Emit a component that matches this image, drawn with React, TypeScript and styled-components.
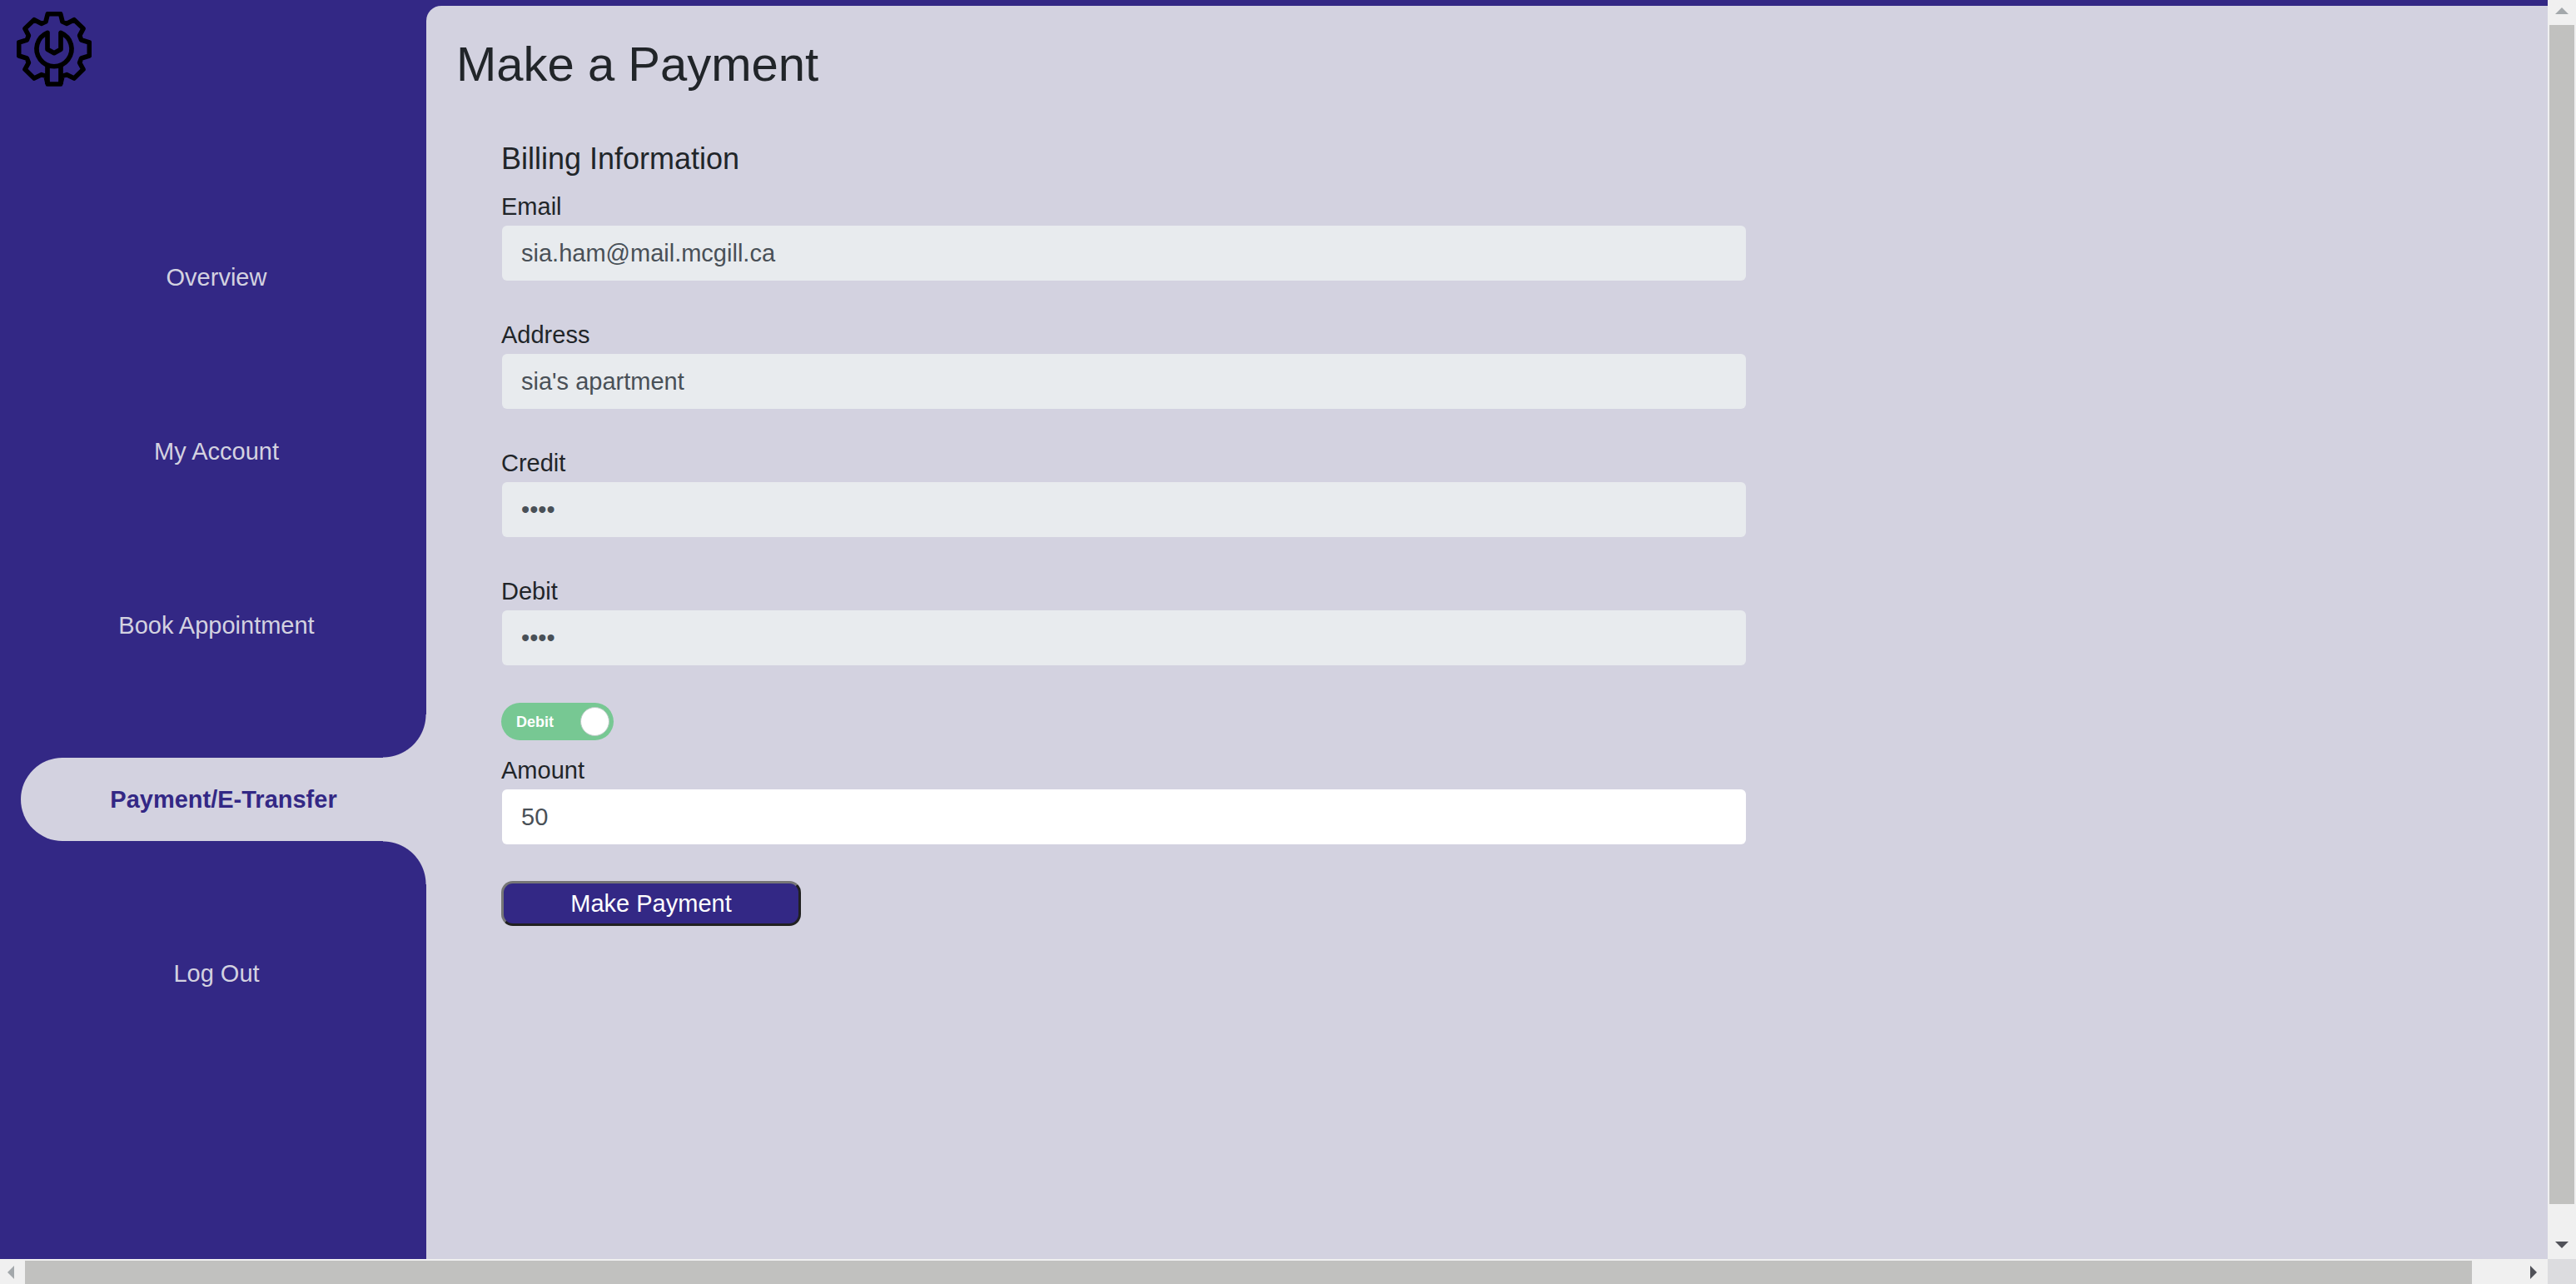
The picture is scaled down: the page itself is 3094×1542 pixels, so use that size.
import React, { useState } from "react";
import styled, { createGlobalStyle, css } from "styled-components";

const purple = "#332885";
const lilac = "#d3d2e0";

const GlobalStyle = createGlobalStyle`
  *, *::before, *::after { box-sizing: border-box; }
  html, body { margin: 0; height: 100%; overflow: hidden; }
  body {
    font-family: "Liberation Sans", Arial, sans-serif;
    font-size: 29px;
    line-height: 43px;
    color: #212529;
    background: ${purple};
  }
  input, button { font: inherit; }
`;

const Window = styled.div`
  display: grid;
  grid-template-columns: minmax(0, 1fr) 34px;
  grid-template-rows: minmax(0, 1fr) 30px;
  height: 100vh;
`;

const Page = styled.div`
  display: grid;
  grid-template-columns: 512px minmax(0, 1fr);
  padding-top: 7px;
  background: ${purple};
  overflow: hidden;
`;

const Sidebar = styled.aside`
  display: flex;
  flex-direction: column;
  gap: 179px;
  padding-top: 7px;
`;

const Logo = styled.svg`
  display: block;
  width: 90px;
  height: 90px;
  margin-left: 20px;
`;

const Nav = styled.nav`
  display: flex;
  flex-direction: column;
  gap: 109px;
`;

const NavLink = styled.a<{ $active?: boolean }>`
  display: flex;
  align-items: center;
  justify-content: center;
  position: relative;
  height: 100px;
  margin-left: 8px;
  color: ${lilac};
  text-decoration: none;

  ${({ $active }) =>
    $active &&
    css`
      margin-left: 25px;
      border-radius: 50px 0 0 50px;
      background: ${lilac};
      color: ${purple};
      font-weight: bold;

      &::before,
      &::after {
        content: "";
        position: absolute;
        right: 0;
        width: 52px;
        height: 52px;
      }
      &::before {
        bottom: 100%;
        background: radial-gradient(circle at 0 0, ${purple} 51px, ${lilac} 52px);
      }
      &::after {
        top: 100%;
        background: radial-gradient(circle at 0 100%, ${purple} 51px, ${lilac} 52px);
      }
    `}
`;

const Main = styled.main`
  padding: 35px 0 0 36px;
  border-top-left-radius: 18px;
  background: ${lilac};
`;

const Title = styled.h1`
  margin: 0 0 58px;
  font-size: 58px;
  line-height: 69px;
  font-weight: normal;
`;

const Form = styled.form`
  width: 64%;
  padding: 0 58px 0 54px;
`;

const Heading = styled.h2`
  margin: 0 0 15px;
  font-size: 36px;
  line-height: 43px;
  font-weight: normal;
`;

const Field = styled.div`
  margin-bottom: 43px;
`;

const Label = styled.label`
  display: block;
`;

const TextInput = styled.input`
  display: block;
  width: 100%;
  height: 68px;
  padding: 0 23px;
  border: 1px solid transparent;
  border-radius: 7px;
  background: #fff;
  background-clip: padding-box;
  color: #495057;
  outline: none;

  &:disabled {
    background-color: #e8ebee;
    opacity: 1;
  }
`;

const Switch = styled.label<{ $on: boolean }>`
  display: flex;
  flex-direction: ${({ $on }) => ($on ? "row" : "row-reverse")};
  align-items: center;
  justify-content: space-between;
  width: 135px;
  height: 45px;
  margin: 44px 0 15px;
  padding: 0 5px 0 18px;
  border-radius: 23px;
  background: #77c893;
  color: #fff;
  font-size: 18px;
  line-height: 22px;
  font-weight: bold;
  cursor: pointer;
`;

const SwitchInput = styled.input`
  position: absolute;
  width: 1px;
  height: 1px;
  margin: 0;
  opacity: 0;
`;

const Knob = styled.span`
  width: 35px;
  height: 35px;
  border: 1px solid #b9c9c4;
  border-radius: 50%;
  background: #fff;
`;

const Submit = styled.button`
  display: block;
  width: 360px;
  height: 54px;
  padding: 0;
  border: 3px solid;
  border-color: #767676 #212121 #212121 #767676;
  border-radius: 14px;
  background: ${purple};
  color: #fff;
  cursor: pointer;
`;

const Track = styled.div<{ $vertical?: boolean }>`
  display: flex;
  flex-direction: ${({ $vertical }) => ($vertical ? "column" : "row")};
  padding: ${({ $vertical }) => ($vertical ? "0 2px" : "2px 0 0")};
  background: #f0f0f0;
`;

type Direction = "up" | "down" | "left" | "right";

const Arrow = styled.button<{ $vertical: boolean }>`
  display: flex;
  align-items: center;
  justify-content: center;
  flex: 0 0 30px;
  padding: ${({ $vertical }) => ($vertical ? "0 0 4px" : "0 4px 0 0")};
  border: 0;
  background: none;
  color: #505158;

  &:disabled {
    color: #a3a8ab;
  }
`;

const Rail = styled.div<{ $vertical?: boolean }>`
  display: flex;
  flex: 1;
  padding: ${({ $vertical }) => ($vertical ? "0 0 36px" : "0 61px 0 0")};
`;

const Thumb = styled.div`
  flex: 1;
  background: #c1c1bf;
`;

const Corner = styled.div`
  background: #dcdcdf;
`;

const arrowPoints: Record<Direction, string> = {
  up: "0,12 16,12 8,4",
  down: "0,4 16,4 8,12",
  left: "12,0 12,16 4,8",
  right: "4,0 4,16 12,8",
};

function ScrollArrow({ direction, disabled }: { direction: Direction; disabled?: boolean }) {
  return (
    <Arrow
      type="button"
      $vertical={direction === "up" || direction === "down"}
      aria-label={`Scroll ${direction}`}
      disabled={disabled}
    >
      <svg width="16" height="16" viewBox="0 0 16 16" fill="currentColor">
        <polygon points={arrowPoints[direction]} />
      </svg>
    </Arrow>
  );
}

function GearWrench() {
  return (
    <Logo viewBox="60 42 270 270" fill="none" stroke="#000" strokeWidth="17" strokeLinejoin="round" aria-hidden="true">
      <path d="M172 50H218L225 78L241 85L267 71L300 103L287 128L293 144L322 153V201L293 210L287 226L300 250L267 282L241 269L225 274L218 303H172L165 274L149 269L123 282L90 250L103 226L97 210L68 201V153L97 144L103 128L90 103L123 71L149 85L165 78Z" />
      <path d="M171 118A63 63 0 1 0 219 118V178L195 191L171 178Z" />
      <path d="M171 240V303M219 240V303" />
    </Logo>
  );
}

const links = ["Overview", "My Account", "Book Appointment", "Payment/E-Transfer", "Log Out"];
const current = "Payment/E-Transfer";

const billing = [
  { id: "email", label: "Email", type: "text", value: "sia.ham@mail.mcgill.ca" },
  { id: "address", label: "Address", type: "text", value: "sia's apartment" },
  { id: "credit", label: "Credit", type: "password", value: "1234" },
  { id: "debit", label: "Debit", type: "password", value: "1234" },
];

export default function App() {
  const [useDebit, setUseDebit] = useState(true);
  const [amount, setAmount] = useState("50");

  return (
    <Window>
      <GlobalStyle />
      <Page>
        <Sidebar>
          <GearWrench />
          <Nav>
            {links.map((name) => (
              <NavLink
                key={name}
                href="#"
                $active={name === current}
                aria-current={name === current ? "page" : undefined}
              >
                {name}
              </NavLink>
            ))}
          </Nav>
        </Sidebar>
        <Main>
          <Title>Make a Payment</Title>
          <Form onSubmit={(event) => event.preventDefault()}>
            <Heading>Billing Information</Heading>
            {billing.map((field) => (
              <Field key={field.id}>
                <Label htmlFor={field.id}>{field.label}</Label>
                <TextInput id={field.id} type={field.type} value={field.value} disabled readOnly />
              </Field>
            ))}
            <Switch $on={useDebit}>
              <SwitchInput
                type="checkbox"
                role="switch"
                checked={useDebit}
                onChange={(event) => setUseDebit(event.target.checked)}
              />
              {useDebit ? "Debit" : "Credit"}
              <Knob />
            </Switch>
            <Field>
              <Label htmlFor="amount">Amount</Label>
              <TextInput id="amount" type="text" value={amount} onChange={(event) => setAmount(event.target.value)} />
            </Field>
            <Submit type="submit">Make Payment</Submit>
          </Form>
        </Main>
      </Page>
      <Track $vertical>
        <ScrollArrow direction="up" disabled />
        <Rail $vertical>
          <Thumb />
        </Rail>
        <ScrollArrow direction="down" />
      </Track>
      <Track>
        <ScrollArrow direction="left" disabled />
        <Rail>
          <Thumb />
        </Rail>
        <ScrollArrow direction="right" />
      </Track>
      <Corner />
    </Window>
  );
}
